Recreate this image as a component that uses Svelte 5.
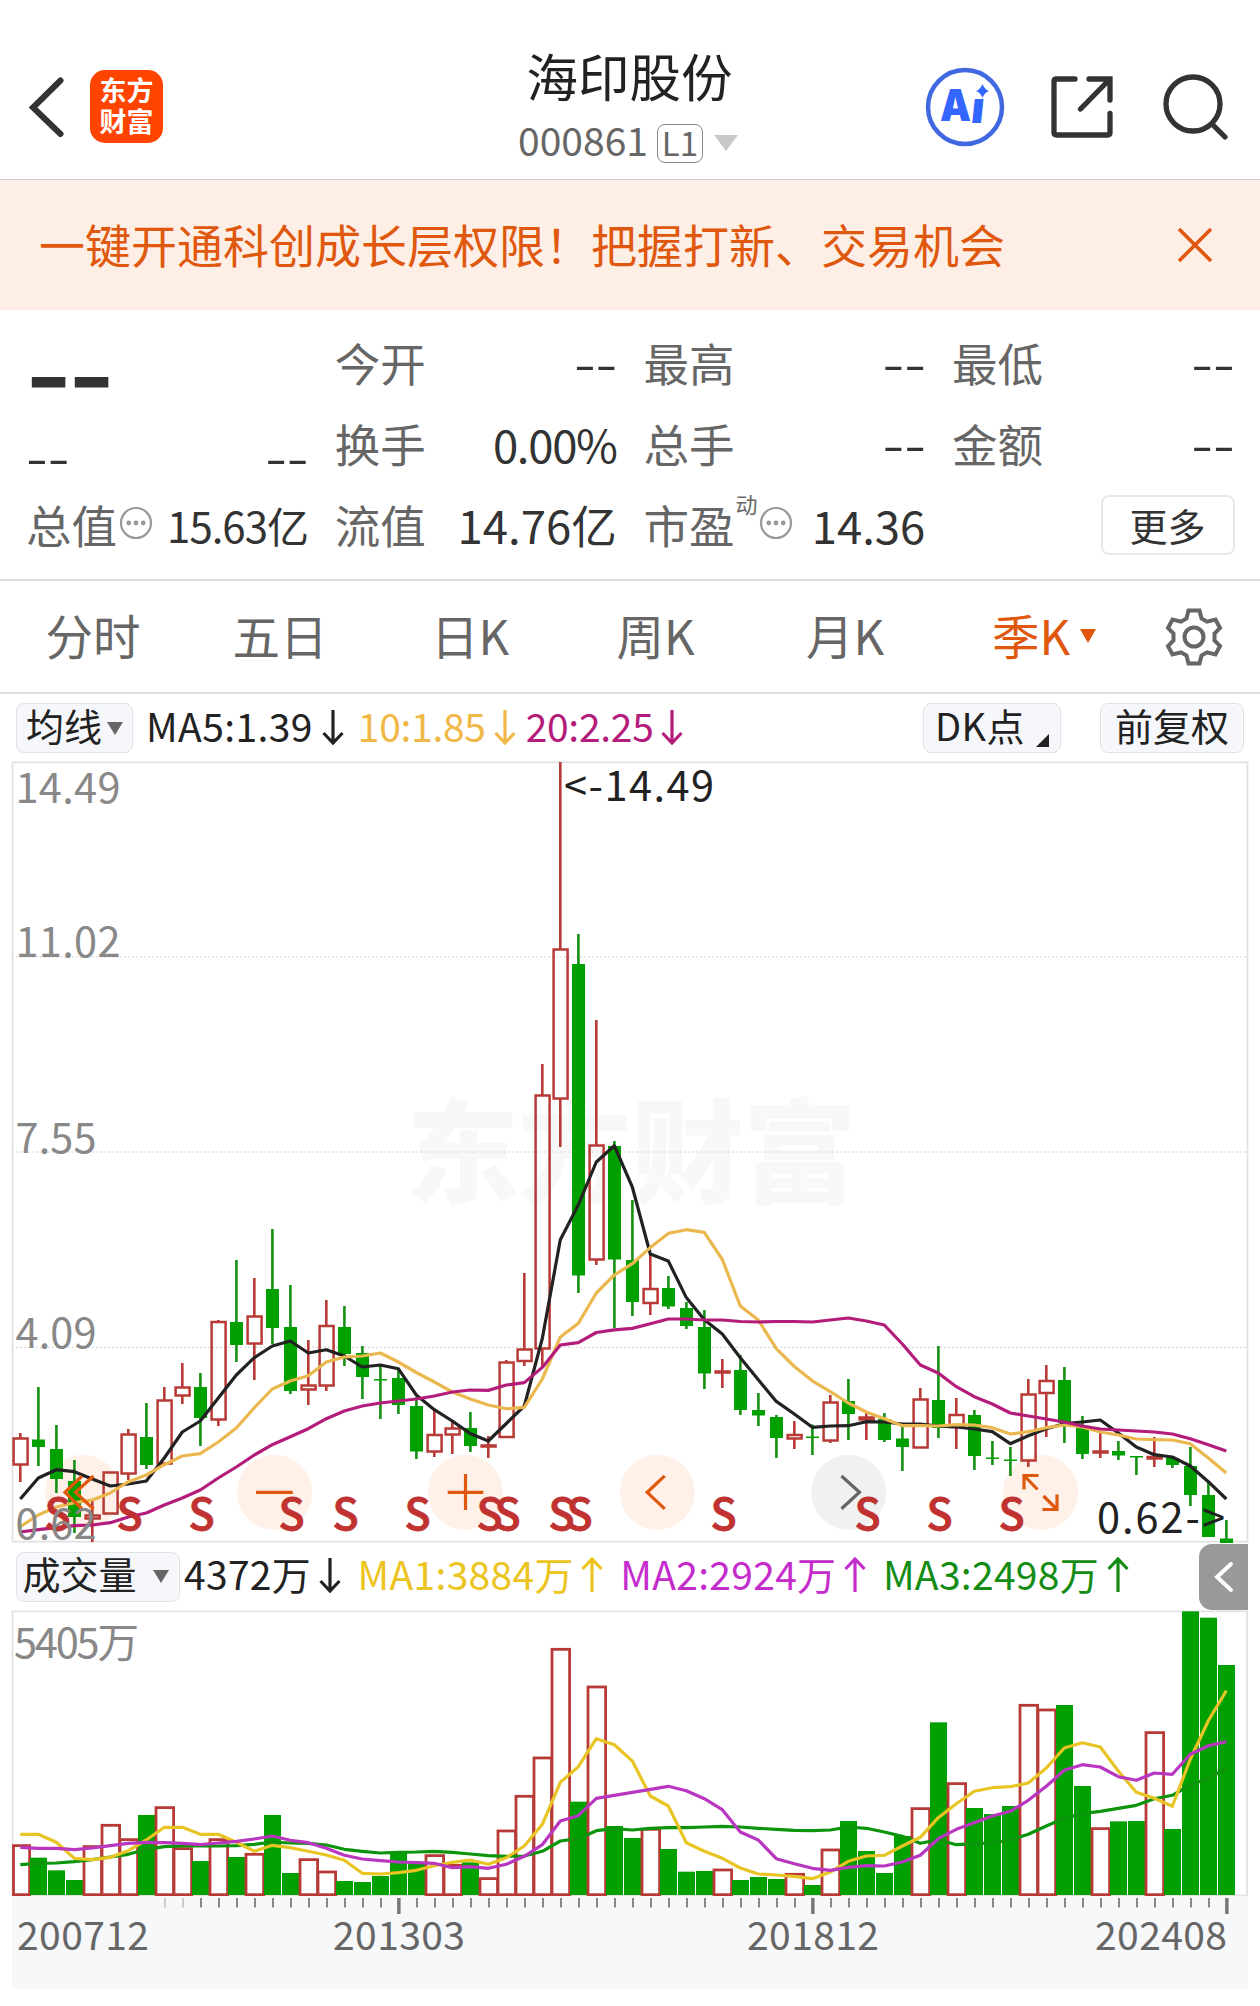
<script lang="ts">
  type Candle = {
    up: boolean;
    high: number;
    top: number;
    bottom: number;
    low: number;
  };

  // Horizontal geometry shared by both charts
  const START = 20.3;
  const STEP = 18;
  const x = (i: number) => START + i * STEP;

  // direction, high, body top, body bottom, low (plot coordinates)
  const rawCandles = `r 1433 1438 1465 1482|g 1387 1439.5 1447 1466|g 1425 1449 1479 1493|g 1460 1481 1517 1533|r 1499 1515 1519 1542
r 1472 1472 1514 1514|r 1429 1434 1474 1480|g 1403 1437 1465 1469|r 1387 1400 1464 1464|r 1363 1387 1396 1404
g 1373 1387 1418 1446|r 1320 1321.5 1420 1426|g 1260 1322 1345 1362|r 1278 1316 1344 1380|g 1229 1289 1328 1344
g 1285 1327 1391 1394|r 1340 1385 1390 1405|r 1300 1325.5 1386 1391|g 1306 1327 1354 1366|g 1346 1353 1377 1399
g 1366 1379 1380.5 1419|g 1370 1378 1405 1414|g 1397 1406 1451.5 1459|r 1409 1434.5 1452 1457|r 1422 1428 1435 1454
g 1412 1428 1446 1452|r 1436 1445 1446 1458|r 1360 1362 1437.5 1438|r 1273 1349 1361.5 1366|r 1064 1095 1349 1367
r 762 949 1099 1147|g 934 964 1275.5 1293|r 1020 1145 1260 1265|g 1141 1146 1259.5 1328|g 1200 1260 1302 1316
r 1254 1288.5 1303.5 1315|g 1276 1288 1306.5 1309|g 1302 1308 1326 1329|g 1310 1327 1373.5 1389|r 1359 1371 1373 1388
g 1355 1370 1410 1415|g 1393 1410 1415.5 1426|g 1415 1417 1438 1458|r 1421 1434.5 1439 1449|g 1424.5 1436.5 1438 1455
r 1395 1402 1441 1443|g 1379 1401 1414 1440|r 1411 1417 1420 1440|g 1413 1419 1440 1442|g 1425 1438.5 1447 1471
r 1388 1399 1448 1448|g 1346 1400 1428 1438|r 1398 1414.5 1427.5 1449|g 1410 1415 1456 1470|g 1441 1457.5 1459 1465
g 1447 1459.5 1461 1476|r 1379 1394 1461 1467|r 1365 1380.5 1393.5 1437|g 1367 1380 1423 1443|g 1416 1427 1454 1459
r 1431 1451 1453 1458|g 1441 1451 1455.5 1460|g 1456 1456 1457.5 1475|r 1437 1456.5 1459 1467|g 1457 1458 1465 1468
g 1447 1466 1495 1506|g 1483 1495 1537 1537|g 1520 1538.5 1543 1543`;

  const candles: Candle[] = rawCandles.split(/[|\n]/).map((row) => {
    const [dir, high, top, bottom, low] = row.trim().split(' ');
    return { up: dir === 'r', high: +high, top: +top, bottom: +bottom, low: +low };
  });

  // Price averages
  const ma5 = [
    1499, 1478, 1469.7, 1471.7, 1479, 1486, 1484, 1481, 1458, 1432, 1421, 1398, 1375, 1357.7, 1346, 1341, 1353,
    1349.7, 1356, 1367, 1365, 1368.7, 1395, 1409.7, 1421, 1433.6, 1441, 1423.5, 1406, 1338.5, 1239.8, 1205, 1162,
    1145.7, 1187, 1254, 1261, 1297.6, 1319.7, 1334, 1357.8, 1379.8, 1401.4, 1414, 1427.3, 1426, 1425.7, 1421.7,
    1422, 1424, 1424, 1426, 1427, 1429, 1431.7, 1443.7, 1435.7, 1428.7, 1423.7, 1422, 1420, 1433, 1447, 1454.7,
    1457, 1466, 1481.7, 1499
  ];
  const ma10 = [
    1526.7, 1515, 1507, 1502.7, 1500, 1493, 1481.7, 1475, 1464.7, 1456, 1453.7, 1442, 1428, 1407.7, 1389, 1381,
    1375.7, 1362, 1357, 1356, 1353, 1362, 1372.5, 1382, 1392, 1399, 1405, 1408.8, 1407.4, 1379, 1337, 1323.4, 1293,
    1275, 1263.7, 1247.6, 1233.4, 1229.7, 1232.4, 1259.5, 1306, 1320, 1348.6, 1366.5, 1380.8, 1391.7, 1403, 1412,
    1418.7, 1425.7, 1425.7, 1426, 1424.7, 1425, 1427.7, 1434, 1431.7, 1427.7, 1425, 1427, 1432, 1435, 1439, 1439.7,
    1440, 1443.7, 1458, 1473
  ];
  const ma20 = [
    1532, 1529.7, 1527.7, 1525.7, 1525, 1522.7, 1517, 1513, 1505, 1498, 1490, 1478, 1467, 1455, 1444.7, 1436.7,
    1428.7, 1418.7, 1411, 1406, 1403, 1401, 1399, 1396, 1392, 1390, 1390.4, 1385, 1382.6, 1367.4, 1345, 1342.6,
    1332.5, 1329.8, 1328.4, 1323.8, 1319, 1319, 1320, 1320, 1321.5, 1322, 1321.5, 1321.5, 1322, 1320, 1318, 1321,
    1325, 1344, 1365, 1373, 1386.7, 1396.7, 1404, 1413, 1416, 1419, 1422, 1426, 1429, 1430, 1431, 1432, 1434,
    1438.7, 1444.7, 1451
  ];

  // Volume series, measured downwards in thirds of a pixel
  const VOL_ORIGIN = 1600;
  const VOL_BASE = 1895;
  const vy = (v: number) => VOL_ORIGIN + v / 3;

  const volumes = [
    'r733', 'g773', 'g811', 'g840', 'r736', 'r672', 'r715', 'g645', 'r619', 'r742', 'g783', 'r715', 'g771', 'r759',
    'g645', 'g819', 'r775', 'r812', 'g843', 'g846', 'g828', 'g757', 'g787', 'r763', 'r792', 'g787', 'r832', 'r689',
    'r585', 'r470', 'r144', 'g605', 'r257', 'g678', 'g714', 'r684', 'g747', 'g815', 'g813', 'r806', 'g840', 'g831',
    'g837', 'r819', 'g855', 'r746', 'g663', 'g753', 'g819', 'g708', 'r622', 'g367', 'r547', 'g624', 'g642', 'g618',
    'r312', 'r326', 'g315', 'g558', 'r682', 'g664', 'g663', 'r394', 'g687', 'g34', 'g53', 'g195'
  ].map((v) => ({ up: v[0] === 'r', top: vy(+v.slice(1)) }));

  const vol1 = [
    703, 703, 727, 775, 779, 772, 752, 720, 682, 682, 703, 703, 727, 754, 736, 743, 754, 765, 781, 820, 822, 818,
    811, 797, 787, 780, 793, 773, 738, 673, 547, 500, 416, 434, 483, 588, 618, 728, 754, 775, 804, 822, 825, 829,
    836, 816, 784, 768, 766, 738, 712, 653, 611, 574, 563, 560, 549, 504, 444, 428, 441, 513, 577, 595, 619, 478,
    362, 272
  ].map(vy);
  const vol2 = [
    742, 745, 745, 749, 744, 737, 730, 727, 728, 730, 734, 729, 724, 717, 708, 721, 728, 745, 766, 777, 782, 786,
    788, 790, 803, 800, 805, 793, 769, 734, 663, 647, 595, 586, 577, 568, 559, 572, 596, 629, 696, 720, 776, 791,
    805, 811, 802, 797, 798, 786, 766, 716, 688, 668, 648, 634, 601, 559, 511, 494, 501, 530, 541, 519, 523, 463,
    437, 425
  ].map(vy);
  const vol3 = [
    794, 790, 789, 785, 779, 771, 763, 748, 740, 738, 738, 738, 737, 733, 726, 729, 730, 735, 748, 754, 759, 757,
    756, 754, 757, 762, 767, 769, 768, 754, 723, 716, 692, 686, 690, 685, 683, 683, 681, 679, 681, 685, 688, 691,
    692, 690, 681, 685, 696, 709, 730, 719, 734, 731, 729, 720, 703, 678, 655, 641, 634, 625, 616, 596, 586, 555,
    535, 505
  ].map(vy);

  const line = (ys: number[]) => ys.map((y, i) => `${x(i).toFixed(1)},${y.toFixed(1)}`).join(' ');

  const grid = [957, 1152, 1347.3];
  const prices = [
    { label: '14.49', y: 803, w: 105 },
    { label: '11.02', y: 957, w: 105 },
    { label: '7.55', y: 1152.5, w: 81 },
    { label: '4.09', y: 1348, w: 81 },
    { label: '0.62', y: 1539, w: 81 }
  ];
  const signals = [2, 6, 10, 15, 18, 22, 26, 27, 30, 31, 39, 47, 51, 55];
  const controls = [82.7, 274.7, 465.3, 657.3, 848.7, 1040.7];

  const ticks = Array.from({ length: 60 }, (_, k) => k + 8);
  const majors = [21, 44, 67];
  const dates = [
    { label: '200712', x: 17 },
    { label: '201303', x: 333 },
    { label: '201812', x: 747 },
    { label: '202408', x: 1095 }
  ];

  const tabs = ['分时', '五日', '日K', '周K', '月K', '季K'];
  let active = $state('季K');
  let showBanner = $state(true);
</script>

{#snippet arrow(up: boolean)}
  <svg class="arrow" width="22" height="36" viewBox="0 0 22 36">
    {#if up}
      <path d="M11 35V2M1.5 12L11 2l9.500 10" />
    {:else}
      <path d="M11 1v33M1.500 24L11 34l9.500-10" />
    {/if}
  </svg>
{/snippet}

{#snippet info()}
  <svg class="info" width="34" height="34" viewBox="0 0 34 34">
    <circle cx="17" cy="17" r="15" fill="none" stroke="#999" stroke-width="2.200" />
    <circle cx="9.800" cy="17" r="2.400" fill="#999" />
    <circle cx="17" cy="17" r="2.400" fill="#999" />
    <circle cx="24.200" cy="17" r="2.400" fill="#999" />
  </svg>
{/snippet}

<div class="page">
  <header>
    <div class="side">
      <svg class="back" width="42" height="70" viewBox="0 0 42 70">
        <path d="M36.500 8.500L9 35.500l27.500 26.500" fill="none" stroke="#333" stroke-width="6" stroke-linecap="round" />
      </svg>
      <div class="logo"><span>东方</span><span>财富</span></div>
    </div>
    <div class="title">
      <h1>海印股份</h1>
      <div class="code">
        <span class="num">000861</span>
        <span class="level">L1</span>
        <svg width="24" height="16" viewBox="0 0 24 16"><path d="M0 0h24L12 16z" fill="#c8c8c8" /></svg>
      </div>
    </div>
    <div class="tools">
      <svg width="80" height="80" viewBox="0 0 80 80">
        <circle cx="40" cy="40" r="37" fill="none" stroke="#4068e0" stroke-width="4.500" />
        <text x="15" y="54" class="ai" textLength="31" lengthAdjust="spacingAndGlyphs">A</text>
        <text x="46" y="56" class="ai" transform="skewX(-6) translate(5 0)">ı</text>
        <path d="M57.500 17q1.800 5.200 6.500 7-4.700 1.800-6.500 7-1.800-5.200-6.500-7 4.700-1.800 6.500-7z" fill="#3366ff" />
      </svg>
      <svg class="share" width="62" height="62" viewBox="0 0 62 62">
        <path d="M24 3H5.500Q3 3 3 5.500v51Q3 59 5.500 59h51q2.500 0 2.500-2.500V37.500M38 3h21v21M59 3L29.500 33" />
      </svg>
      <svg class="search" width="66" height="66" viewBox="0 0 66 66">
        <circle cx="30" cy="30" r="27" />
        <path d="M49 50l13 13" />
      </svg>
    </div>
  </header>

  {#if showBanner}
    <div class="banner">
      <span>一键开通科创成长层权限！把握打新、交易机会</span>
      <button aria-label="close" onclick={() => (showBanner = false)}>
        <svg width="36" height="36" viewBox="0 0 36 36"><path d="M2 2l32 32M34 2L2 34" stroke="#e0580d" stroke-width="3.600" /></svg>
      </button>
    </div>
  {/if}

  <section class="stats">
    <div class="cell big"><span>--</span></div>
    <div class="cell"><label>今开</label><i>--</i></div>
    <div class="cell"><label>最高</label><i>--</i></div>
    <div class="cell"><label>最低</label><i>--</i></div>

    <div class="cell low"><i>--</i><i>--</i></div>
    <div class="cell"><label>换手</label><span class="pct">0.00%</span></div>
    <div class="cell"><label>总手</label><i>--</i></div>
    <div class="cell"><label>金额</label><i>--</i></div>

    <div class="cell"><label>总值</label>{@render info()}<span class="small">15.63亿</span></div>
    <div class="cell"><label>流值</label><span class="val">14.76亿</span></div>
    <div class="cell"><label>市盈</label><sup>动</sup>{@render info()}<span class="val">14.36</span></div>
    <div class="cell end"><button class="more">更多</button></div>
  </section>

  <nav>
    {#each tabs as tab}
      <button class:active={tab === active} onclick={() => (active = tab)}>
        {tab}{#if tab === '季K'}<svg width="16" height="14" viewBox="0 0 16 14"><path d="M0 0h16L8 14z" fill="#e0580d" /></svg>{/if}
      </button>
    {/each}
    <svg class="gear" width="58" height="60" viewBox="-29 -30 58 60">
      <path
        d="M-5.500-26.500H5.500L7.500-18.500 13-15.300 21.500-17.500 26-9 20.500-3.500V3.500L26 9 21.500 17.500 13 15.300 7.500 18.500 5.500 26.500H-5.500L-7.500 18.500-13 15.300-21.500 17.500-26 9-20.500 3.500V-3.500L-26-9-21.500-17.500-13-15.300-7.500-18.500z"
      />
      <circle r="9.500" />
    </svg>
  </nav>

  <div class="bar">
    <button class="pill ma"><span>均线</span><svg width="16" height="13" viewBox="0 0 16 13"><path d="M0 0h16L8 13z" fill="#666" /></svg></button>
    <span class="v m1">MA5:1.39</span>{@render arrow(false)}
    <span class="v m2">10:1.85</span><span class="m2">{@render arrow(false)}</span>
    <span class="v m3">20:2.25</span><span class="m3">{@render arrow(false)}</span>
    <button class="pill dk"><span>DK点</span><svg width="13" height="13" viewBox="0 0 13 13"><path d="M13 0v13H0z" fill="#222" /></svg></button>
    <button class="pill fq"><span>前复权</span></button>
  </div>

  <!-- Price chart -->
  <svg class="plot" width="1260" height="780" viewBox="0 762 1260 780">
    <text x="406" y="1194" class="mark" textLength="450">东方财富</text>
    {#each grid as y}
      <line x1="12" x2="1247" y1={y} y2={y} stroke="#d4d4d4" stroke-dasharray="2 2" />
    {/each}
    <path d="M12.500 762V1542M12 762.300H1247.500V1541.700H12" fill="none" stroke="#e2e2e2" stroke-width="1.800" />

    {#each controls as cx, i}
      <circle {cx} cy="1492.300" r="37.500" fill={i === 4 ? '#f1f1f1' : '#fff0e8'} />
    {/each}

    {#each candles as c, i}
      {#if c.up}
        <path
          d="M{x(i)} {c.high}V{c.top}M{x(i)} {c.bottom}V{c.low}"
          stroke="#b83a36"
          stroke-width="2.600"
        />
        <rect
          x={x(i) - 6.7}
          y={c.top + 0.5}
          width="14"
          height={Math.max(c.bottom - c.top - 1, 1)}
          fill="none"
          stroke="#b83a36"
          stroke-width="2.500"
        />
      {:else}
        <rect x={x(i) - 1.2} y={c.high} width="2.600" height={c.low - c.high} fill="#149014" />
        <rect x={x(i) - 6.3} y={c.top} width="13" height={c.bottom - c.top} fill="#00a000" />
      {/if}
    {/each}

    <g class="lines">
      <polyline points={line(ma5)} stroke="#222" />
      <polyline points={line(ma10)} stroke="#ebb850" />
      <polyline points={line(ma20)} stroke="#b41c7c" />
    </g>

    <g class="icons">
      <path d="M82 1476l-17 16.300 17 16.700M93.500 1476l-18 16.300 18 16.700" />
      <path d="M256 1492.300h36.700M447.700 1492.300h35.600M465.500 1474v36" stroke="#c8601c" />
      <path d="M664.700 1475.800l-17.500 16.500 17.500 16.600" />
      <path d="M841.500 1476l18 16.300-18 16.400" class="off" />
      <path d="M1038.500 1475.500h-14.500v14M1024 1475.500l13.500 14M1042.500 1509.500h14.500v-15M1057 1509.500l-13.500-13.500" />
    </g>

    {#each signals as i}
      <text x={x(i) + 1.3} y="1529.500" class="signal">S</text>
    {/each}
    {#each prices as p}
      <text x="15.500" y={p.y} class="price" textLength={p.w}>{p.label}</text>
    {/each}
    <text x="564" y="800.500" class="note" textLength="150">&lt;-14.49</text>
    <text x="1097" y="1533" class="note" textLength="128">0.62-&gt;</text>
  </svg>

  <div class="bar vol">
    <button class="pill cj"><span>成交量</span><svg width="16" height="13" viewBox="0 0 16 13"><path d="M0 0h16L8 13z" fill="#666" /></svg></button>
    <span class="v">4372万</span>{@render arrow(false)}
    <span class="v y">MA1:3884万</span><span class="y">{@render arrow(true)}</span>
    <span class="v p">MA2:2924万</span><span class="p">{@render arrow(true)}</span>
    <span class="v g">MA3:2498万</span><span class="g">{@render arrow(true)}</span>
    <button class="drawer" aria-label="expand">
      <svg width="20" height="32" viewBox="0 0 20 32"><path d="M17 3L3 16l14 13" fill="none" stroke="#fff" stroke-width="4" stroke-linecap="round" /></svg>
    </button>
  </div>

  <!-- Volume chart -->
  <svg class="plot" width="1260" height="285" viewBox="0 1611 1260 285">
    <path d="M12.500 1611V1896M12 1611.300H1247V1895.500H12" fill="none" stroke="#e2e2e2" stroke-width="1.800" />
    {#each volumes as v, i}
      {#if v.up}
        <rect x={x(i) - (i === 0 ? 6.8 : 8.3)} y={v.top + 1.3} width={i === 0 ? 16.1 : 17.6} height={VOL_BASE - v.top - 1.6} fill="#fff" stroke="#b83a36" stroke-width="2.800" />
      {:else}
        <rect x={x(i) + 0.2 - 8.5} y={v.top} width="17" height={VOL_BASE - v.top} fill="#00a000" />
      {/if}
    {/each}
    <g class="lines">
      <polyline points={line(vol3)} stroke="#0c940c" />
      <polyline points={line(vol1)} stroke="#e8c424" />
      <polyline points={line(vol2)} stroke="#b836c0" />
    </g>
    <text x="14" y="1658" class="price" textLength="125">5405万</text>
  </svg>

  <!-- Time axis -->
  <svg class="axis" width="1260" height="93" viewBox="0 1896 1260 93">
    <rect x="12" y="1896" width="1236" height="93" fill="#f7f8fa" />
    {#each ticks as i}
      {#if majors.includes(i)}
        <rect x={x(i) - 1.2} y="1898" width="3.500" height="16" fill="#777" />
      {:else}
        <rect x={x(i) - 0.3} y="1898" width="2" height="9.500" fill={i < 10 ? '#ccc' : '#888'} />
      {/if}
    {/each}
    {#each dates as d}
      <text x={d.x} y="1950" class="date" textLength="132">{d.label}</text>
    {/each}
  </svg>
</div>

<style>
  :global(body) {
    margin: 0;
    background: #fff;
  }

  .page {
    width: 1260px;
    height: 2006px;
    overflow: hidden;
    background: #fff;
    color: #222;
    font-family: 'Noto Sans CJK SC', 'Noto Sans', sans-serif;
  }

  svg {
    display: block;
    flex: none;
  }

  button {
    border: none;
    padding: 0;
    margin: 0;
    background: none;
    color: inherit;
    font: inherit;
  }

  header {
    box-sizing: border-box;
    height: 180px;
    padding: 34px 31px 0 24px;
    border-bottom: 1px solid #ccc;
    display: grid;
    grid-template-columns: 1fr auto 1fr;
    align-items: center;
  }

  .side,
  .tools {
    display: flex;
    align-items: center;
  }

  .back {
    margin-right: 24px;
  }

  .logo {
    width: 73px;
    height: 73px;
    border-radius: 15px;
    background: #ff4400;
    color: #fff;
    font-size: 27px;
    font-weight: 700;
    line-height: 31px;
    display: flex;
    flex-direction: column;
    align-items: center;
    justify-content: center;
  }

  .logo span {
    margin: -2px 0 2px;
  }

  .title {
    display: flex;
    flex-direction: column;
    align-items: center;
    margin-top: -1px;
    margin-right: -6px;
  }

  h1 {
    margin: 0;
    font-size: 51.500px;
    font-weight: 400;
    line-height: 66px;
  }

  .code {
    display: flex;
    align-items: center;
    height: 62px;
    margin-left: -3px;
    color: #666;
  }

  .num {
    font-size: 39px;
  }

  .level {
    box-sizing: border-box;
    width: 46px;
    height: 39px;
    margin: 8px 11px 0 9px;
    border: 1.500px solid #888;
    border-radius: 8px;
    font-size: 33px;
    line-height: 34px;
    text-align: center;
  }

  .code svg {
    margin-top: 8px;
  }

  .tools {
    justify-content: flex-end;
  }

  .ai {
    font: 900 44px Inter, sans-serif;
    fill: #3366ff;
  }

  .share {
    margin: 0 50px 0 46px;
  }

  .share,
  .search {
    fill: none;
    stroke: #333;
    stroke-width: 5.300;
    stroke-linecap: round;
  }

  .banner {
    height: 130px;
    padding: 0 47px 0 39px;
    background: #fdeee6;
    color: #e0580d;
    font-size: 46px;
    display: flex;
    align-items: center;
    justify-content: space-between;
  }

  .banner span {
    margin-top: -5px;
  }

  .stats {
    box-sizing: border-box;
    height: 271px;
    padding: 12px 27px 0 26px;
    border-bottom: 2px solid #ddd;
    display: grid;
    grid-template-columns: repeat(4, 280px);
    grid-template-rows: repeat(3, 81px);
    column-gap: 28.700px;
    color: #333;
    font-size: 45.500px;
  }

  .cell {
    display: flex;
    align-items: center;
    justify-content: space-between;
    line-height: 81px;
    white-space: nowrap;
  }

  .cell label {
    color: #666;
  }

  .cell i {
    font-style: normal;
    font-weight: 300;
    font-size: 65px;
    margin: -8px -2.500px 0 0;
  }

  .low i {
    margin-top: 18px;
  }

  .big span {
    font-size: 124px;
    line-height: 81px;
    margin: 1px 0 0 1px;
    -webkit-text-stroke: 1.800px #333;
  }

  .pct {
    letter-spacing: -1.300px;
    margin-right: -2px;
  }

  .val {
    margin: -1px -2px 0 0;
  }

  .small {
    font-size: 42px;
    letter-spacing: -1px;
    margin: -1px -2px 0 -4px;
  }

  .info {
    margin-top: -4px;
  }

  label + .info {
    margin-left: -16px;
  }

  .cell sup {
    align-self: flex-start;
    margin: 1px -18px 0 -18px;
    font-size: 22px;
    line-height: 36px;
    color: #666;
  }

  .end {
    justify-content: flex-end;
  }

  .more {
    box-sizing: border-box;
    width: 134px;
    height: 60px;
    margin-right: -2.500px;
    border: 2px solid #e8e8e8;
    border-radius: 8px;
    font-size: 38px;
    line-height: 48px;
  }

  nav {
    box-sizing: border-box;
    height: 113px;
    border-bottom: 2px solid #dcdfe0;
    display: grid;
    grid-template-columns: 186px 188px 192px 179px 200px 198px auto;
    align-items: center;
    color: #666;
    font-size: 47.500px;
  }

  nav button {
    display: flex;
    align-items: center;
    justify-content: center;
    margin-top: -4px;
  }

  nav button svg {
    margin: 3px 0 0 10px;
  }

  nav .active {
    color: #e0580d;
  }

  .gear {
    margin-left: 22px;
    fill: none;
    stroke: #666;
    stroke-width: 4;
  }

  .bar {
    height: 68px;
    display: flex;
    align-items: center;
    font-size: 39px;
    white-space: nowrap;
    position: relative;
  }

  .v {
    margin-top: -7px;
    letter-spacing: 0.400px;
  }

  .pill {
    box-sizing: border-box;
    height: 50px;
    border: 1.500px solid #e0e3e6;
    border-radius: 8px;
    background: #f6f7fa;
    font-size: 38px;
    line-height: 44px;
    display: flex;
    align-items: center;
    justify-content: center;
    gap: 5px;
  }

  .pill span {
    margin-top: -7px;
  }

  .ma {
    width: 117px;
    margin: 0 13px 0 16px;
  }

  .dk {
    width: 138px;
    margin: 0 39px 0 auto;
    gap: 11px;
  }

  .dk span {
    letter-spacing: 0.500px;
  }

  .dk svg {
    align-self: flex-end;
    margin-bottom: 5px;
  }

  .fq {
    width: 144px;
    margin-right: 16px;
  }

  .arrow {
    margin: -3px 10px 0 8px;
    fill: none;
    stroke: currentColor;
    stroke-width: 3.200;
  }

  .m1 + .arrow {
    margin: -3px 14px 0 9px;
  }

  .m2,
  .m3 {
    letter-spacing: -0.300px;
  }

  .m2 {
    color: #f0b848;
  }

  .m3 {
    color: #b41c7c;
  }

  .vol {
    height: 69px;
  }

  .vol .v {
    letter-spacing: 0.300px;
  }

  .cj {
    width: 164px;
    margin: 0 4px 0 16px;
    gap: 16px;
  }

  .vol .arrow {
    margin: -4px 17px 0 7.500px;
  }

  .cj span {
    margin-left: -5px;
  }

  .y {
    color: #ecc420;
  }

  .p {
    color: #c42ccc;
  }

  .g {
    color: #148c14;
  }

  .drawer {
    position: absolute;
    right: 12px;
    top: 2px;
    width: 49px;
    height: 66px;
    border-radius: 13px 0 0 13px;
    background: #999;
    display: flex;
    align-items: center;
    justify-content: center;
  }

  .plot {
    overflow: visible;
  }

  .mark {
    font-size: 113px;
    font-weight: 900;
    fill: #f8f8f8;
  }

  .lines polyline {
    fill: none;
    stroke-width: 3.200;
    stroke-linejoin: round;
  }

  .icons path {
    fill: none;
    stroke: #e0580d;
    stroke-width: 3.200;
  }

  .icons .off {
    stroke: #666;
  }

  .signal {
    font-size: 43px;
    font-weight: 500;
    fill: #c03230;
    stroke: #c03230;
    stroke-width: 0.800;
    text-anchor: middle;
  }

  .price {
    font-size: 41.500px;
    fill: #888;
  }

  .note {
    font-size: 41.500px;
    fill: #222;
  }

  .date {
    font-size: 39px;
    fill: #666;
  }
</style>
